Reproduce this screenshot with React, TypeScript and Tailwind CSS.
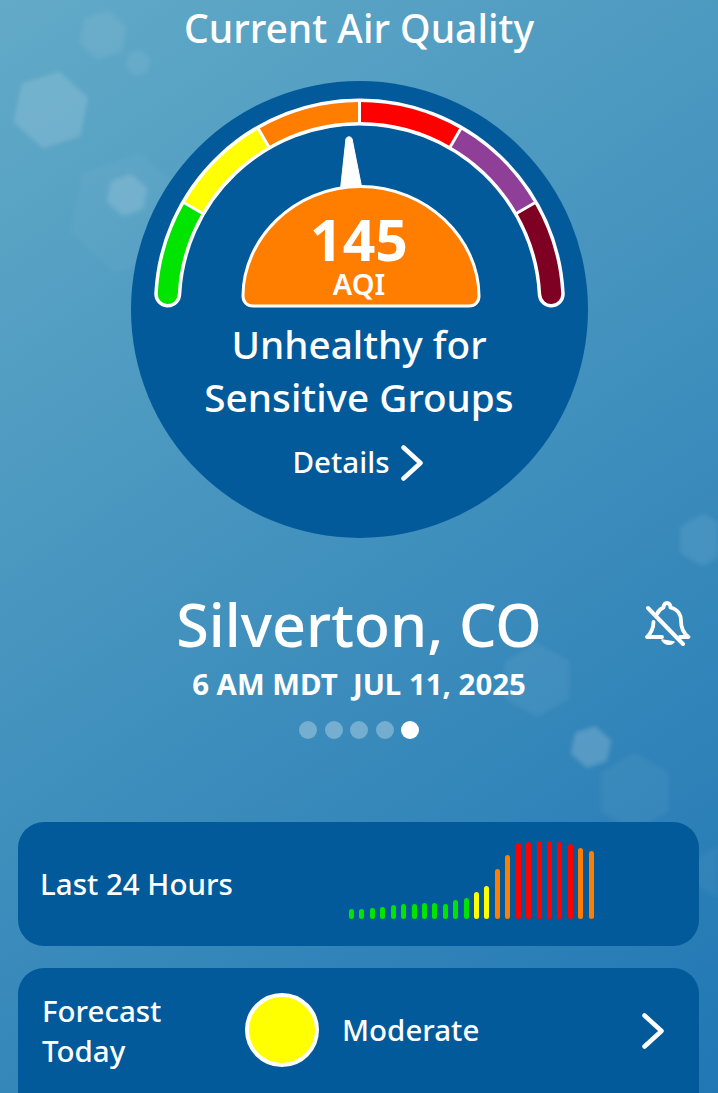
import React from "react";

const hexes: [number, number, number, number, number][] = [
  [51, 110, 36, 12, 0.14],
  [103, 35, 22, 12, 0.07],
  [138, 63, 10, 12, 0.07],
  [128, 213, 58, 12, 0.04],
  [127, 195, 18, 12, 0.14],
  [703, 540, 23, 0, 0.08],
  [537, 680, 34, 0, 0.06],
  [591, 747, 18, 12, 0.18],
  [635, 792, 36, 0, 0.05],
  [716, 872, 22, 0, 0.04],
];

function hexPoints(cx: number, cy: number, r: number, rot: number) {
  const p: string[] = [];
  for (let i = 0; i < 6; i++) {
    const a = ((60 * i + rot + 30) * Math.PI) / 180;
    p.push(`${(cx + r * Math.cos(a)).toFixed(1)},${(cy + r * Math.sin(a)).toFixed(1)}`);
  }
  return p.join(" ");
}

const CX = 228.5;
const CY = 223;
const R = 192;

function pt(deg: number, r = R) {
  const a = (deg * Math.PI) / 180;
  return [CX + r * Math.cos(a), CY - r * Math.sin(a)];
}

function arc(from: number, to: number) {
  const [x1, y1] = pt(from);
  const [x2, y2] = pt(to);
  return `M${x1.toFixed(2)} ${y1.toFixed(2)}A${R} ${R} 0 0 1 ${x2.toFixed(2)} ${y2.toFixed(2)}`;
}

function Gauge() {
  const segs: [number, number, string][] = [
    [150, 120, "#ffff00"],
    [120, 90, "#ff7e00"],
    [90, 60, "#ff0000"],
    [60, 30, "#8f3f97"],
  ];
  return (
    <svg width="457" height="240" viewBox="0 0 457 240" className="block">
      <path d={arc(177, 3)} fill="none" stroke="#ffffff" strokeWidth="27" strokeLinecap="round" />
      <path d={arc(177, 150)} fill="none" stroke="#00e400" strokeWidth="20" strokeLinecap="round" />
      <path d={arc(30, 3)} fill="none" stroke="#7e0023" strokeWidth="20" strokeLinecap="round" />
      {segs.map(([a, b, c]) => (
        <path key={c} d={arc(a, b)} fill="none" stroke={c} strokeWidth="20" />
      ))}
      {[150, 120, 90, 60, 30].map((d) => {
        const [x1, y1] = pt(d, R - 11);
        const [x2, y2] = pt(d, R + 11);
        return <line key={d} x1={x1} y1={y1} x2={x2} y2={y2} stroke="#ffffff" strokeWidth="3" />;
      })}
      <path d="M215 57.500Q218 54 221 57.500L231 108H209.500Z" fill="#ffffff" stroke="#ffffff" strokeWidth="1" strokeLinejoin="round" />
      <path
        d="M112 215C112 158 163 105.500 229.500 105.500C296 105.500 348 158 348 215C348 221 344 225 338 225H122C116 225 112 221 112 215Z"
        fill="#ff7e00"
        stroke="#ffffff"
        strokeWidth="3"
      />
    </svg>
  );
}

const bars: [number, string][] = [
  [10.5, "g"], [10.5, "g"], [11, "g"], [12, "g"], [14.5, "g"], [15, "g"], [15, "g"], [16, "g"], [16, "g"], [15, "g"], [19.5, "g"], [21, "g"],
  [27.5, "y"], [33.5, "y"], [50, "o"], [64, "o"], [76, "r"], [77, "r"], [78, "r"], [78, "r"], [77, "r"], [75, "r"], [71, "o"], [68, "o"],
];

const barClass: Record<string, string> = {
  g: "bg-[#00e400]",
  y: "bg-[#ffff00]",
  o: "bg-[#ff7e00]",
  r: "bg-[#ff0000]",
};

function Chevron({ className }: { className: string }) {
  return (
    <svg viewBox="0 0 22 36" className={className} fill="none" stroke="#ffffff" strokeWidth="4.500" strokeLinecap="round" strokeLinejoin="round">
      <path d="M2.500 2.500L19.500 18L2.500 33.500" />
    </svg>
  );
}

function BellMuted() {
  return (
    <svg width="46" height="46" viewBox="0 0 46 46" fill="none" className="block">
      <path
        d="M12 14C13.500 10 16 8.500 18.500 7.500C18.500 1.500 25.500 1.500 25.500 7.500C32 9 36 14 36 21C36 28 38 33 43.500 37H35M8.500 22C8.500 29 6 33 2 37H17"
        stroke="#ffffff"
        strokeWidth="3.800"
        strokeLinecap="round"
        strokeLinejoin="round"
      />
      <path d="M17 40C20 45 26 45.500 29 42Z" fill="#ffffff" stroke="#ffffff" strokeWidth="1.500" strokeLinejoin="round" />
      <path d="M3 8L38 44" stroke="#ffffff" strokeWidth="4" strokeLinecap="round" />
    </svg>
  );
}

export default function App() {
  return (
    <div className="relative h-[1093px] w-[718px] overflow-hidden bg-[linear-gradient(145deg,#62aac7,#2077b4)] text-white [font-family:'Noto_Sans','Open_Sans',sans-serif]">
      <svg width="718" height="1093" viewBox="0 0 718 1093" className="absolute inset-0 blur-[2px]">
        {hexes.map(([x, y, r, rot, o], i) => (
          <polygon key={i} points={hexPoints(x, y, r, rot)} fill="#ffffff" stroke="#ffffff" strokeWidth="6" strokeLinejoin="round" opacity={o} />
        ))}
      </svg>

      <div className="relative flex h-full flex-col items-center">
        <h1 className="h-[81px] shrink-0 pt-[3px] text-[39px] font-medium leading-[50px]">Current Air Quality</h1>

        <div className="relative flex h-[457px] w-[457px] shrink-0 flex-col items-center rounded-full bg-[#025a9a]">
          <Gauge />
          <div className="absolute left-0 right-0 top-[129px] flex flex-col items-center">
            <div className="text-[57px] font-bold leading-[58px]">145</div>
            <div className="mt-[1px] text-[29px] font-semibold leading-[30px]">AQI</div>
          </div>
          <div className="-mt-[3px] text-center text-[38.7px] font-medium leading-[53px]">
            Unhealthy for
            <br />
            Sensitive Groups
          </div>
          <div className="mt-[18px] flex items-center gap-[12px] pr-[2px]">
            <span className="text-[29.5px] font-medium leading-[40px]">Details</span>
            <Chevron className="mt-[1px] h-[36px] w-[22px]" />
          </div>
        </div>

        <div className="relative mt-[44px] flex w-full flex-col items-center">
          <div className="text-[59.3px] font-medium leading-[84px]">Silverton, CO</div>
          <div className="absolute left-[645px] top-[18px]">
            <BellMuted />
          </div>
          <div className="mt-[1px] whitespace-pre text-[29.4px] font-bold leading-[34px]">6 AM MDT  JUL 11, 2025</div>
          <div className="mt-[20px] flex gap-[7.500px]">
            <span className="h-[18px] w-[18px] rounded-full bg-white/30" />
            <span className="h-[18px] w-[18px] rounded-full bg-white/30" />
            <span className="h-[18px] w-[18px] rounded-full bg-white/30" />
            <span className="h-[18px] w-[18px] rounded-full bg-white/30" />
            <span className="h-[18px] w-[18px] rounded-full bg-white" />
          </div>
        </div>

        <div className="ml-[18px] mt-[83px] flex h-[124px] w-[681px] shrink-0 items-center self-start rounded-[26px] bg-[#025a9a] pl-[22px]">
          <span className="mt-[1px] w-[309px] text-[29.5px] font-medium">Last 24 Hours</span>
          <div className="box-content flex h-[78px] w-[245px] items-end justify-between self-end pb-[27px]">
            {bars.map(([h, c], i) => (
              <span key={i} style={{ height: h }} className={`w-[5px] rounded-full ${barClass[c]}`} />
            ))}
          </div>
        </div>

        <div className="ml-[18px] mt-[22px] flex h-[160px] w-[681px] shrink-0 items-start self-start rounded-t-[26px] bg-[#025a9a] pl-[24px] pt-[23px]">
          <div className="w-[203px] text-[29.5px] font-medium leading-[40px]">
            Forecast
            <br />
            Today
          </div>
          <div className="mt-[2px] h-[74px] w-[74px] shrink-0 rounded-full border-[4px] border-white bg-[#ffff00]" />
          <div className="ml-[23px] mt-[19px] w-[300px] text-[29.5px] font-medium leading-[40px]">Moderate</div>
          <Chevron className="mt-[22px] h-[36px] w-[22px]" />
        </div>
      </div>
    </div>
  );
}
